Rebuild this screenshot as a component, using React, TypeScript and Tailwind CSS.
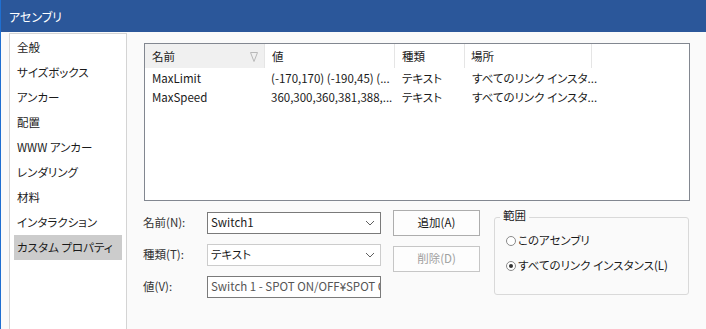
import React from 'react';

const font = "font-['Noto_Sans_CJK_JP','Noto_Sans',sans-serif] [font-feature-settings:'palt']";

// Left navigation entries
const navItems = [
  "全般",
  "サイズボックス",
  "アンカー",
  "配置",
  "WWW アンカー",
  "レンダリング",
  "材料",
  "インタラクション",
  "カスタム プロパティ",
];

// Custom properties table
const rows = [
  { name: "MaxLimit", value: "(-170,170) (-190,45) (...", kind: "テキスト", place: "すべてのリンク インスタ..." },
  { name: "MaxSpeed", value: "360,300,360,381,388,...", kind: "テキスト", place: "すべてのリンク インスタ..." },
];

const Chevron = () => (
  <svg width="10" height="6" viewBox="0 0 10 6" className="shrink-0">
    <polyline points="1,1 5,5 9,1" fill="none" stroke="#606060" strokeWidth="1" />
  </svg>
);

const Radio = ({ checked }: { checked?: boolean }) => (
  <span className="w-[10px] h-[10px] rounded-full border border-[#8a8a8a] bg-white flex items-center justify-center shrink-0">
    {checked && <span className="w-[4px] h-[4px] rounded-full bg-[#333]" />}
  </span>
);

const App = () => {
  return (
    <div className={`w-[706px] h-[329px] overflow-hidden bg-[#fafafa] flex flex-col border-l border-[#1f6fd1] text-[11.5px] text-[#1a1a1a] ${font}`}>
      {/* Title bar */}
      <div className="h-[32px] shrink-0 bg-[#2b579a] flex items-center pl-[8px] pt-[1px] text-white text-[12px]">
        アセンブリ
      </div>

      <div className="flex flex-1 min-h-0">
        {/* Sidebar */}
        <div className="pl-[8px] pt-[1px] shrink-0">
          <div className="w-[118px] h-[310px] bg-white border border-[#d4d4d4] pt-[1px] px-[4px]">
            {navItems.map((item, i) => (
              <div
                key={item}
                className={`h-[25px] flex items-center pl-[3px] pt-[1px] whitespace-nowrap ${i === navItems.length - 1 ? "bg-[#cccccc]" : ""}`}
              >
                {item}
              </div>
            ))}
          </div>
        </div>

        {/* Main panel */}
        <div className="pl-[17px] pt-[11px] flex flex-col">
          {/* List view */}
          <div className="w-[546px] h-[158px] bg-white border border-[#828790]">
            <div className="flex h-[24px]">
              <div className="w-[120px] bg-[#f0f0f0] border-r border-[#e5e5e5] flex items-center justify-between pl-[7px] pr-[6px] pt-[2px]">
                <span>名前</span>
                <svg width="8" height="10" viewBox="0 0 8 10">
                  <polyline points="0.5,0.5 7.5,0.5 4,9.5 0.5,0.5" fill="none" stroke="#b8b8b8" strokeWidth="1" />
                </svg>
              </div>
              <div className="w-[130px] border-r border-[#e5e5e5] flex items-center pl-[7px] pt-[2px]">値</div>
              <div className="w-[70px] border-r border-[#e5e5e5] flex items-center pl-[7px] pt-[2px]">種類</div>
              <div className="w-[127px] border-r border-[#e5e5e5] flex items-center pl-[6px] pt-[2px]">場所</div>
            </div>
            {rows.map((r) => (
              <div key={r.name} className="flex h-[19px] items-center whitespace-nowrap pt-[2px]">
                <div className="w-[120px] pl-[7px]">{r.name}</div>
                <div className="w-[130px] pl-[6px]">{r.value}</div>
                <div className="w-[70px] pl-[7px]">{r.kind}</div>
                <div className="w-[127px] pl-[7px]">{r.place}</div>
              </div>
            ))}
          </div>

          {/* Form */}
          <div className="flex mt-[9px]">
            <div className="flex flex-col gap-[10px] pt-[2px] -ml-px">
              <div className="flex items-center h-[22px]">
                <span className="w-[64px] text-[#333]">名前(N):</span>
                <div className="w-[174px] h-[22px] bg-white border border-[#7a7a7a] flex items-center justify-between pl-[3px] pr-[5px]">
                  <span>Switch1</span>
                  <Chevron />
                </div>
              </div>
              <div className="flex items-center h-[22px]">
                <span className="w-[64px] text-[#333]">種類(T):</span>
                <div className="w-[174px] h-[22px] bg-white border border-[#cccccc] flex items-center justify-between pl-[3px] pr-[5px]">
                  <span>テキスト</span>
                  <Chevron />
                </div>
              </div>
              <div className="flex items-center h-[22px]">
                <span className="w-[64px] text-[#333]">値(V):</span>
                <div className="w-[174px] h-[22px] bg-white border border-[#7a7a7a] flex items-center pl-[3px] overflow-hidden whitespace-nowrap text-[#555]">
                  Switch 1 - SPOT ON/OFF¥SPOT ON
                </div>
              </div>
            </div>

            <div className="flex flex-col gap-[10px] ml-[12px]">
              <button className="w-[87px] h-[26px] bg-[#fdfdfd] border border-[#adadad] text-[#1a1a1a]">追加(A)</button>
              <button className="w-[87px] h-[26px] bg-[#fdfdfd] border border-[#c6c6c6] text-[#a0a0a0]">削除(D)</button>
            </div>

            <div className="relative ml-[14px] mt-[7px] w-[195px] h-[78px] border border-[#d9d9d9] rounded-[3px]">
              <span className="absolute -top-[11px] left-[5px] px-[3px] bg-[#fafafa] leading-[16px]">範囲</span>
              <div className="flex flex-col gap-[8px] pt-[14px] pl-[11px]">
                <div className="flex items-center gap-[2px] h-[17px]">
                  <Radio />
                  <span>このアセンブリ</span>
                </div>
                <div className="flex items-center gap-[2px] h-[17px]">
                  <Radio checked />
                  <span>すべてのリンク インスタンス(L)</span>
                </div>
              </div>
            </div>
          </div>
        </div>
      </div>
    </div>
  );
};

export default App;
